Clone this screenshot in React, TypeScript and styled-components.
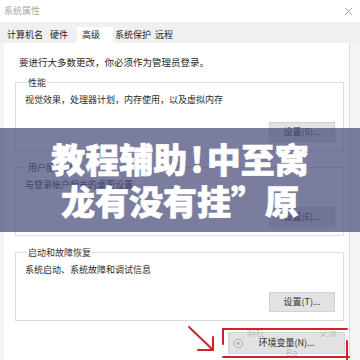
import React from "react";
import styled, { createGlobalStyle } from "styled-components";

const Global = createGlobalStyle`
  html, body { margin: 0; padding: 0; background: #fff; }
  body { font-family: "Noto Sans CJK SC", "Noto Sans", sans-serif; }
  #root { width: 360px; height: 360px; }
`;

const Page = styled.div`
  position: relative;
  width: 360px;
  height: 360px;
  overflow: hidden;
  display: flex;
  flex-direction: column;
  background: #f5f5f5;
  font-family: "Noto Sans CJK SC", "Noto Sans", sans-serif;
  color: #2a2a2a;
`;

const TitleBar = styled.div`
  height: 22px;
  flex: none;
  background: #fff;
  display: flex;
  align-items: center;
  justify-content: space-between;
  padding: 0 7px 0 4px;
  box-sizing: border-box;
`;

const Title = styled.span`
  font-size: 9px;
  line-height: 12px;
  color: #a9a9a9;
`;

const TabStrip = styled.div`
  height: 21px;
  flex: none;
  background: #f0f0f0;
  display: flex;
  align-items: flex-end;
`;

const Tab = styled.div<{ $ml: number; $active?: boolean }>`
  height: 16px;
  line-height: 16px;
  font-size: 9px;
  margin-left: ${(p) => p.$ml}px;
  padding: ${(p) => (p.$active ? "0 13px 0 5px" : "0 4px")};
  background: ${(p) => (p.$active ? "#fff" : "transparent")};
  color: #262626;
  white-space: nowrap;
`;

const Body = styled.div`
  flex: 1;
  display: flex;
`;

const Panel = styled.div`
  margin-left: 4px;
  width: 346px;
  box-sizing: border-box;
  background: #fff;
  border-right: 1px solid #dcdcdc;
  padding: 13px 5px 0 11px;
  display: flex;
  flex-direction: column;
`;

const Notice = styled.div`
  font-size: 9.5px;
  line-height: 13px;
  margin-left: 4px;
  color: #262626;
  white-space: nowrap;
`;

const Group = styled.fieldset<{ $first?: boolean }>`
  margin: ${(p) => (p.$first ? "6.5px" : "9.5px")} 0 0;
  padding: 0 8px 8px 9px;
  border: 1px solid #dedede;
  display: flex;
  flex-direction: column;
  min-width: 0;
`;

const Legend = styled.legend`
  font-size: 9px;
  line-height: 13px;
  padding: 0 1px;
  margin-left: 2px;
  color: #333;
`;

const Desc = styled.div`
  font-size: 9px;
  line-height: 13px;
  margin-top: 4px;
  color: #2a2a2a;
  white-space: nowrap;
`;

const ActionButton = styled.div`
  align-self: flex-end;
  width: 66px;
  height: 20px;
  box-sizing: border-box;
  margin-top: 16.5px;
  background: #e3e3e3;
  border: 1px solid #d2d2d2;
  font-size: 9px;
  line-height: 18px;
  text-align: center;
  color: #333;
`;

const BottomRow = styled.div`
  display: flex;
  justify-content: flex-end;
  margin-top: 11px;
`;

const EnvButton = styled.div`
  position: relative;
  width: 117px;
  height: 22px;
  margin-right: -1px;
  box-sizing: border-box;
  background: #e2e2e2;
  border: 1px solid #d4d4d4;
  font-size: 9px;
  line-height: 20px;
  text-align: center;
  color: #2b2b2b;
`;

const Watermark = styled.div`
  position: absolute;
  inset: 0;
  display: flex;
  align-items: center;
  justify-content: space-between;
  padding: 0 4px;
  color: rgba(120, 120, 120, 0.4);
  font-size: 9px;
  pointer-events: none;
`;

const Band = styled.div`
  position: absolute;
  left: 0;
  right: 0;
  top: 128px;
  height: 104px;
  background: rgba(70, 75, 120, 0.72);
  box-sizing: border-box;
  padding-top: 10px;
  text-align: center;
  color: #fff;
  font-family: "Noto Sans CJK SC", sans-serif;
  font-weight: 900;
  font-size: 34px;
  line-height: 42px;
  white-space: nowrap;
  -webkit-text-stroke: 0.6px #fff;
`;

const Bang = styled.span`
  margin: 0 3px;
`;

const Marks = styled.svg`
  position: absolute;
  left: 0;
  top: 0;
  pointer-events: none;
`;

const groups = [
  { title: "性能", desc: "视觉效果，处理器计划，内存使用，以及虚拟内存", btn: "设置(S)..." },
  { title: "用户配置文件", desc: "与登录帐户相关的桌面设置", btn: "设置(E)..." },
  { title: "启动和故障恢复", desc: "系统启动、系统故障和调试信息", btn: "设置(T)..." },
];

const tabs = [
  { label: "计算机名", ml: 3 },
  { label: "硬件", ml: -1 },
  { label: "高级", ml: 5, active: true },
  { label: "系统保护", ml: -2 },
  { label: "远程", ml: -4 },
];

export default function App() {
  return (
    <Page>
      <Global />
      <TitleBar>
        <Title>系统属性</Title>
        <svg width="9" height="9" viewBox="0 0 9 9">
          <path d="M1 1L8 8M8 1L1 8" stroke="#9a9a9a" strokeWidth="0.9" />
        </svg>
      </TitleBar>
      <TabStrip>
        {tabs.map((t) => (
          <Tab key={t.label} $ml={t.ml} $active={t.active}>
            {t.label}
          </Tab>
        ))}
      </TabStrip>
      <Body>
        <Panel>
          <Notice>要进行大多数更改，你必须作为管理员登录。</Notice>
          {groups.map((g, i) => (
            <Group key={g.title} $first={i === 0}>
              <Legend>{g.title}</Legend>
              <Desc>{g.desc}</Desc>
              <ActionButton>{g.btn}</ActionButton>
            </Group>
          ))}
          <BottomRow>
            <EnvButton>
              环境变量(N)...
              <Watermark>
                <svg width="11" height="11" viewBox="0 0 11 11">
                  <circle cx="5.5" cy="5.5" r="4.5" fill="none" stroke="rgba(120,120,120,0.5)" strokeWidth="1" />
                  <circle cx="5.5" cy="5.5" r="1.5" fill="rgba(120,120,120,0.5)" />
                </svg>
                <span>斜杠　　　　　　交流Ba</span>
              </Watermark>
            </EnvButton>
          </BottomRow>
        </Panel>
      </Body>
      <Band>
        教程辅助<Bang>!</Bang>中至窝
        <br />
        龙有没有挂”原
      </Band>
      <Marks width="360" height="360" viewBox="0 0 360 360">
        <g stroke="#d3202f" strokeWidth="2" fill="none" strokeLinecap="round">
          <path d="M223 329H347" />
          <path d="M223 329V344" />
          <path d="M223 357H349" />
          <path d="M347 341V360" />
          <path d="M189 327L213 350" />
          <path d="M198 350H213V337" />
        </g>
      </Marks>
    </Page>
  );
}
